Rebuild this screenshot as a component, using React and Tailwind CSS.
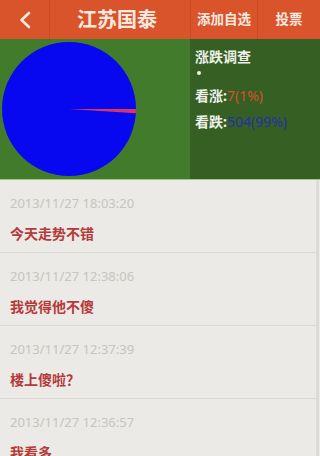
import React from "react";

const comments = [
  { t: "2013/11/27 18:03:20", c: "今天走势不错" },
  { t: "2013/11/27 12:38:06", c: "我觉得他不傻" },
  { t: "2013/11/27 12:37:39", c: "楼上傻啦？" },
  { t: "2013/11/27 12:36:57", c: "我看多" },
];

function Pie() {
  const cx = 68, cy = 68, r = 67;
  const a = (3.6 * Math.PI) / 180;
  const x2 = cx + r * Math.cos(a);
  const y2 = cy + r * Math.sin(a);
  return (
    <svg width="137" height="137" viewBox="0 0 137 137">
      <circle cx={cx} cy={cy} r={r} fill="#0808f0" />
      <path d={`M${cx} ${cy} L${cx + r} ${cy} A${r} ${r} 0 0 1 ${x2} ${y2} Z`} fill="#d8365e" />
    </svg>
  );
}

export default function App() {
  return (
    <div
      className="w-[320px] h-[456px] overflow-hidden bg-[#ebeae6] flex flex-col"
      style={{ fontFamily: '"Noto Sans", "Noto Sans CJK SC", sans-serif' }}
    >
      <div className="h-[39px] bg-[#d9532b] flex items-center text-[#fbe9e0] shrink-0">
        <div className="w-[50px] h-full flex items-center justify-center border-r border-[#c94a24]">
          <svg width="14" height="18" viewBox="0 0 14 18">
            <path d="M11 2 L3.5 9 L11 16" fill="none" stroke="#fbe9e0" strokeWidth="2.6" strokeLinecap="round" strokeLinejoin="round" />
          </svg>
        </div>
        <div className="w-[140px] h-full flex items-center justify-center text-[20px] font-bold pr-[6px]">江苏国泰</div>
        <div className="w-[67px] h-full flex items-center justify-center text-[13.5px] font-bold border-l border-[#c94a24]">添加自选</div>
        <div className="flex-1 h-full flex items-center justify-center text-[13.5px] font-bold border-l border-[#c94a24]">投票</div>
      </div>
      <div className="h-[141px] flex bg-[#427b2b] border-b border-[#9cc98a] shrink-0">
        <div className="w-[190px] flex items-center pl-[1px]">
          <Pie />
        </div>
        <div className="flex-1 bg-[#365f23] pl-[5px] pt-[8px] text-[#eef0ea] text-[14px] font-bold leading-[20px]">
          <div>涨跌调查</div>
          <div className="h-[12px] flex items-center pl-[2px]">
            <div className="w-[4px] h-[4px] rounded-full bg-[#eef0ea]" />
          </div>
          <div className="mt-[7px]">
            看涨:<span className="text-[#d8502c] font-normal">7(1%)</span>
          </div>
          <div className="mt-[6px]">
            看跌:<span className="text-[#2330a8] font-normal">504(99%)</span>
          </div>
        </div>
      </div>
      <div className="flex-1 border-r-[3px] border-[#dcdbd6] mr-[1px]">
        {comments.map((x, i) => (
          <div key={i} className="h-[73px] border-b border-[#d9d8d3] pl-[10px] pt-[14px]">
            <div className="text-[13px] text-[#c6c5c1] leading-[18px]">{x.t}</div>
            <div className="mt-[12px] text-[14px] text-[#b53a3a] font-semibold leading-[20px]">{x.c}</div>
          </div>
        ))}
      </div>
    </div>
  );
}
